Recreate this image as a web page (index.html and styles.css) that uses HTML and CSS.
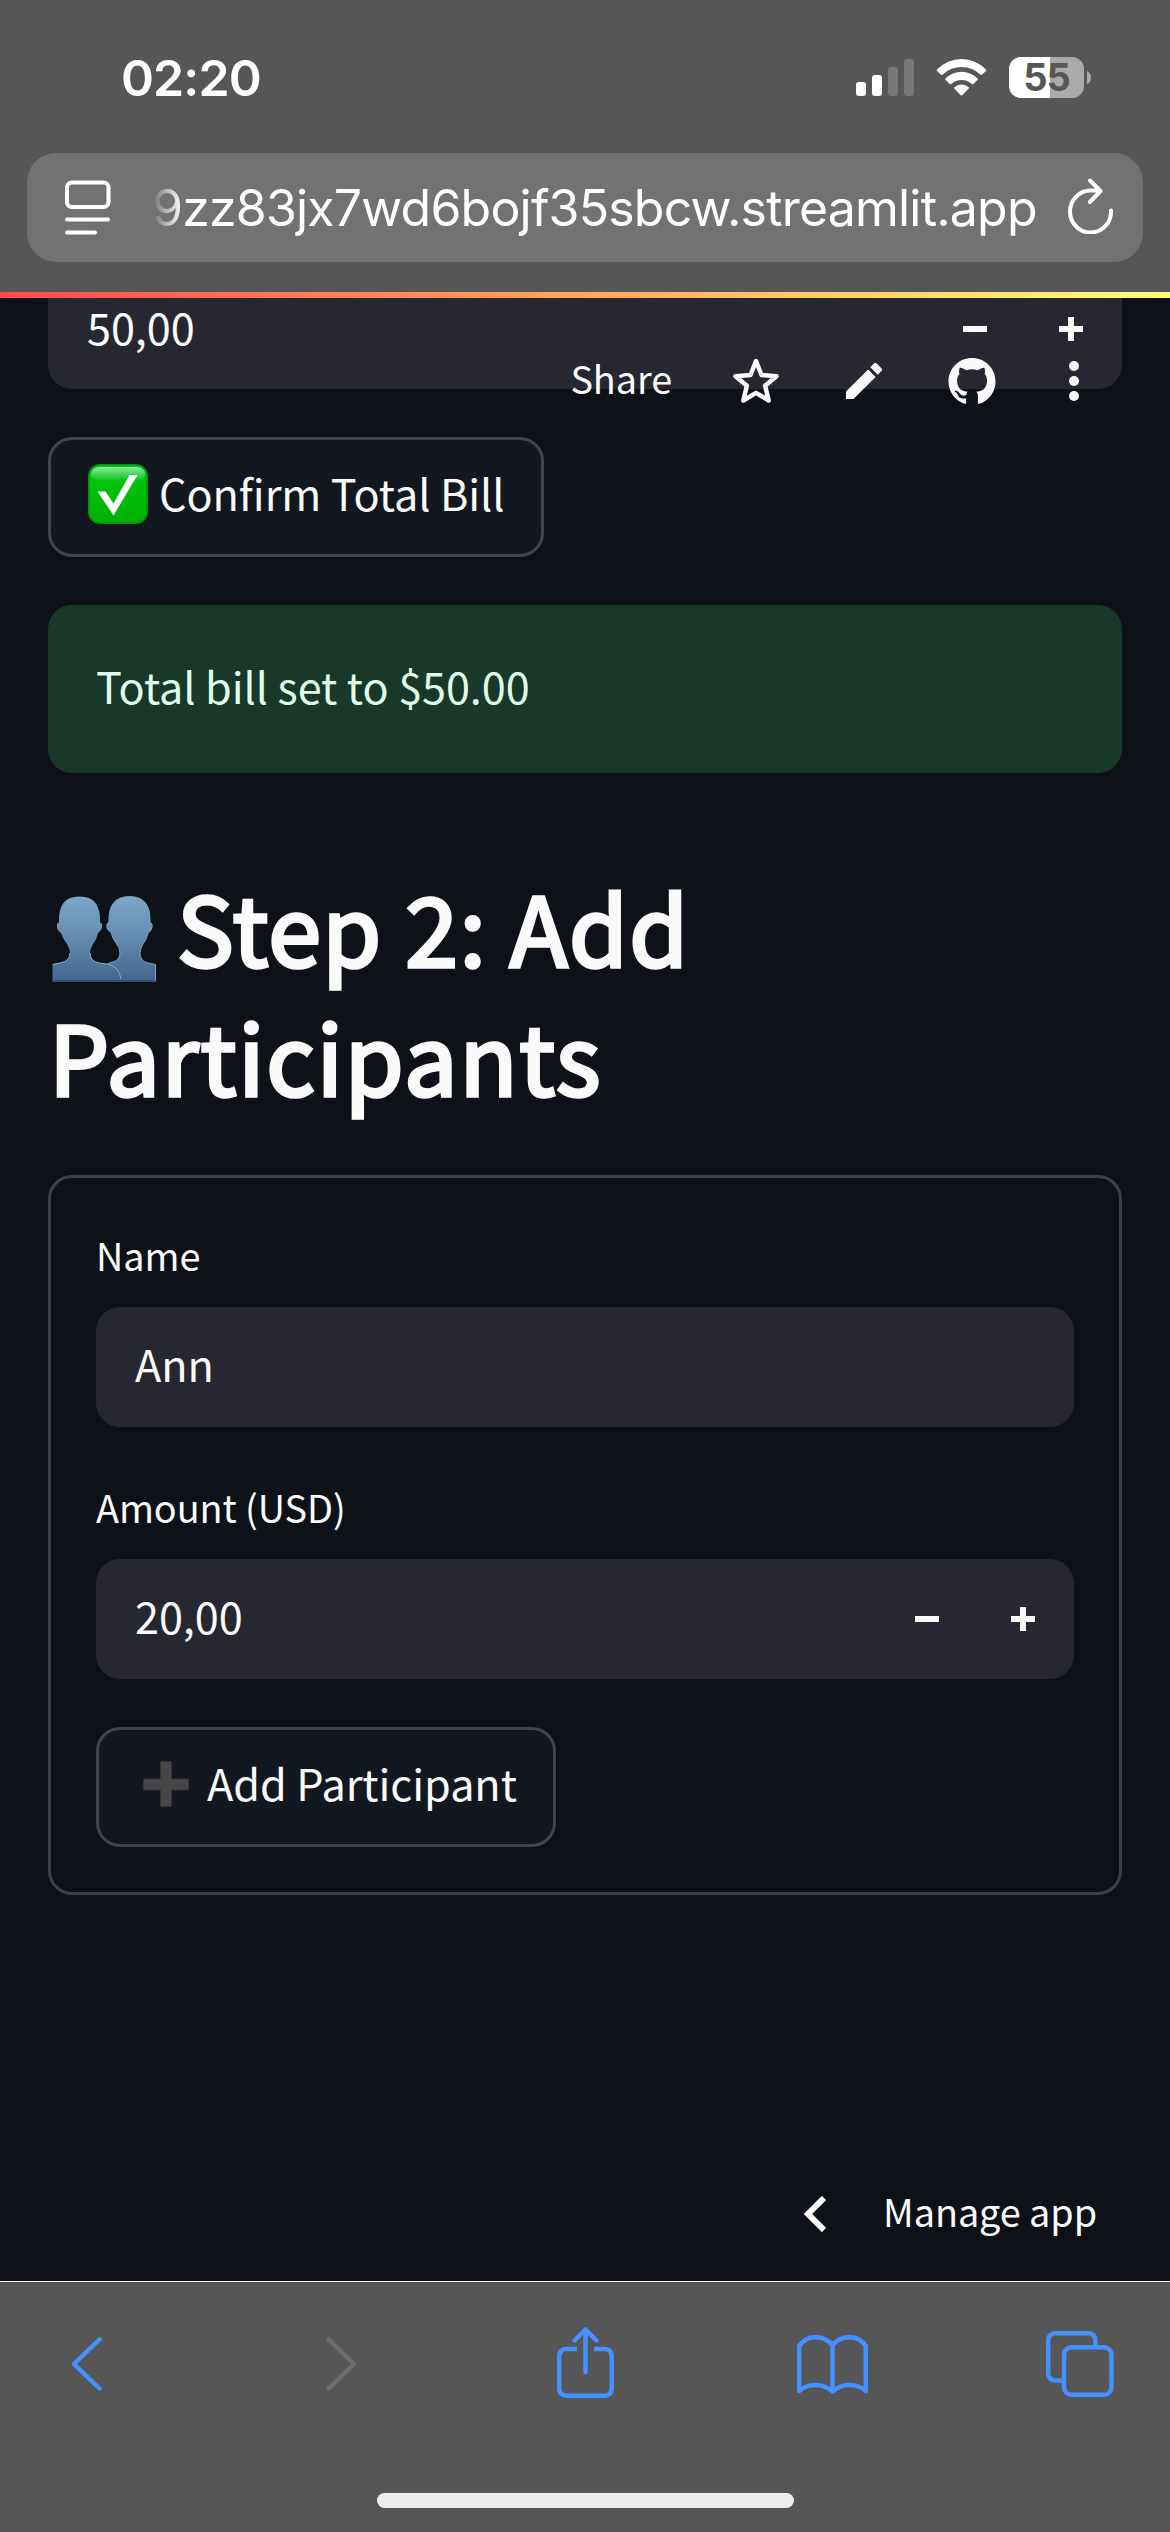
FILE: index.html
```html
<!DOCTYPE html>
<html lang="en">
<head>
<meta charset="utf-8">
<title>Bill splitter</title>
<link rel="stylesheet" href="styles.css">
</head>
<body>
<div class="phone">
  <header class="browser-top">
    <div class="status">
      <span class="clock">02:20</span>
      <div class="indicators">
        <svg class="signal" viewBox="0 0 58 37"><g fill="#fff"><rect y="23" width="10" height="14" rx="3"/><rect x="16" y="16" width="10" height="21" rx="3"/></g><g fill="#777"><rect x="32" y="8" width="10" height="29" rx="3"/><rect x="48" width="10" height="37" rx="3"/></g></svg>
        <svg class="wifi" viewBox="0 0 51 37" fill="#fff"><path d="M1 10.500Q11.500 0 25.500 0T50 10.500Q50.700 11.200 50 12L46 15.800Q45.400 16.400 44.600 15.700Q36.500 8 25.500 8T6.400 15.700Q5.600 16.400 5 15.800L1 12Q.3 11.200 1 10.500Z"/><path d="M9.500 19.500Q16.500 12.700 25.500 12.700T41.500 19.500Q42.100 20.200 41.500 20.900L37.200 25Q36.500 25.600 35.800 25Q31.500 21 25.500 21T15.200 25Q14.500 25.600 13.800 25L9.500 20.900Q8.900 20.200 9.500 19.500Z"/><path d="M18.300 28.300Q21.500 25.500 25.500 25.500T32.700 28.300Q33.300 29 32.700 29.600L26.300 36.200Q25.500 37 24.700 36.200L18.300 29.600Q17.700 29 18.300 28.300Z"/></svg>
        <div class="battery"><span class="battery-level">55</span><svg class="battery-tip" viewBox="0 0 4 13"><path d="M0 0Q4 1.500 4 6.500T0 13Z" fill="#aaa"/></svg></div>
      </div>
    </div>
    <div class="address">
      <svg class="reader" viewBox="0 0 46 56" fill="none" stroke="#fff" stroke-width="4" stroke-linecap="round"><rect x="2" y="2.500" width="41.500" height="24.500" rx="5"/><path d="M2 39.500H43M2 52.500H30"/></svg>
      <span class="url">9zz83jx7wd6bojf35sbcw.streamlit.app</span>
      <svg class="reload" viewBox="0 0 46 56" fill="none" stroke="#fff" stroke-width="4" stroke-linecap="round" stroke-linejoin="round"><path d="M43 32.500A20.500 21 0 1 1 22.500 12.500H32M22 2.500L32.500 13L22 24"/></svg>
    </div>
  </header>
  <div class="rainbow"></div>
  <main class="app">
    <nav class="toolbar">
      <span class="share">Share</span>
      <svg class="star" viewBox="0 0 46 46" fill="none" stroke="#fafafa" stroke-width="4.500" stroke-linejoin="round"><path d="M23 3L28.500 17L43.500 18.200L32.100 27.800L35.700 42.500L23 34.800L10.300 42.500L13.900 27.800L2.500 18.200L17.500 17Z"/></svg>
      <svg class="pencil" viewBox="3 3 18 18" fill="#fafafa"><path d="M3 17.250V21h3.750L17.810 9.940l-3.750-3.750L3 17.250zM20.710 7.040a1 1 0 0 0 0-1.410l-2.340-2.340a1 1 0 0 0-1.410 0l-1.830 1.830 3.750 3.750 1.830-1.830z"/></svg>
      <svg class="github" viewBox="0 0 16 16" fill="#fafafa"><path d="M8 0C3.580 0 0 3.580 0 8c0 3.540 2.290 6.530 5.470 7.590.4.070.55-.17.55-.38 0-.19-.01-.82-.01-1.490-2.010.37-2.530-.49-2.690-.94-.09-.23-.48-.94-.82-1.130-.28-.15-.68-.52-.01-.53.630-.01 1.080.58 1.230.82.720 1.210 1.870.87 2.330.66.070-.52.280-.87.510-1.070-1.780-.2-3.640-.89-3.640-3.950 0-.87.310-1.590.820-2.150-.08-.2-.36-1.020.08-2.120 0 0 .67-.21 2.200.82.640-.18 1.320-.27 2-.27s1.360.09 2 .27c1.530-1.040 2.200-.82 2.200-.82.440 1.100.160 1.920.080 2.120.510.560.820 1.270.820 2.150 0 3.070-1.870 3.750-3.650 3.950.290.250.540.730.540 1.480 0 1.070-.01 1.930-.01 2.200 0 .21.150.460.550.380A8.010 8.010 0 0 0 16 8c0-4.420-3.580-8-8-8z"/></svg>
      <svg class="dots" viewBox="0 0 10 40" fill="#fafafa"><circle cx="5" cy="5" r="5"/><circle cx="5" cy="20" r="5"/><circle cx="5" cy="35" r="5"/></svg>
    </nav>

    <div class="field field-cut"><span class="value">50,00</span><svg class="step" viewBox="0 0 24 24"><path d="M0 9H24V15H0Z"/></svg><svg class="step" viewBox="0 0 24 24"><path d="M9 0H15V9H24V15H15V24H9V15H0V9H9Z"/></svg></div>

    <button class="btn confirm">
      <svg class="check" viewBox="0 0 60 60"><defs><linearGradient id="shine" x1="0" y1="0" x2="0" y2="1"><stop offset="0" stop-color="#8fe89c"/><stop offset="1" stop-color="#00c612"/></linearGradient><linearGradient id="green" x1="0" y1="0" x2="0" y2="1"><stop offset="0" stop-color="#00cb13"/><stop offset="1" stop-color="#00af03"/></linearGradient></defs><rect width="60" height="60" rx="12" fill="#098d14"/><rect x="1.500" y="1.500" width="57" height="57" rx="11" fill="url(#green)"/><rect x="3" y="3" width="54" height="14" rx="8" fill="url(#shine)"/><path d="M9.500 27.500H17.500L25.500 39.500L41.500 11H49.500L25.500 51.500Z" fill="#fff"/></svg>
      <span class="label">Confirm Total Bill</span>
    </button>

    <div class="alert"><span class="alert-text">Total bill set to $50.00</span></div>

    <h1 class="title"><svg class="people" viewBox="0 0 104 86"><defs><linearGradient id="bust" x1="0" y1="0" x2="0" y2="86" gradientUnits="userSpaceOnUse"><stop offset="0" stop-color="#7da6c8"/><stop offset=".45" stop-color="#668eb3"/><stop offset="1" stop-color="#43658e"/></linearGradient></defs><g fill="url(#bust)" stroke="#6fa5bd" stroke-width="1"><path d="M54 85.500V72Q54 67 61 66Q68 64 68 57Q68 52 64 47Q60 42 59 36Q54 34 55 28L57 26Q56 .5 77.500 .5T98 26L100 28Q101 34 96 37Q95 43 91 48Q88 53 88 57Q88 65 96 67L103.500 68.500V85.500Z"/><path stroke="none" d="M.5 85.500V68.500L8 67Q18 65 18 57Q18 53 15 48Q11 43 9 37Q4 34 5 28L7 26Q6 .5 27.500 .5T48 26L50 28Q51 34 46 37Q45 43 41 48Q38 53 38 57Q38 65 47 67L55 68Q69 72 69 85.500Z"/></g><path d="M.5 68.500L8 67Q18 65 18 57M38 57Q38 65 47 67L55 68Q67 70 69 83" fill="none" stroke="#7cb4cc"/><path d="M.5 85H103.500" stroke="#314f76" stroke-width="2"/></svg><span class="line">Step 2: Add</span><br><span class="line second">Participants</span></h1>

    <form class="card">
      <label class="caption name-caption">Name</label>
      <div class="field"><span class="value">Ann</span></div>
      <label class="caption amount-caption">Amount (USD)</label>
      <div class="field"><span class="value">20,00</span><svg class="step" viewBox="0 0 24 24"><path d="M0 9H24V15H0Z"/></svg><svg class="step" viewBox="0 0 24 24"><path d="M9 0H15V9H24V15H15V24H9V15H0V9H9Z"/></svg></div>
      <button class="btn add" type="button">
        <svg class="plus" viewBox="0 0 46 46"><path d="M17.500 .5H28.500V18H45.500V29H28.500V45.500H17.500V29H.5V18H17.500Z" fill="#464646" stroke="#343434"/></svg>
        <span class="label">Add Participant</span>
      </button>
    </form>

    <div class="manage">
      <svg class="chevron" viewBox="0 0 22 36"><path d="M20 2L4 18L20 34" fill="none" stroke="#fff" stroke-width="6"/></svg>
      <span class="manage-text">Manage app</span>
    </div>
  </main>
  <footer class="browser-bottom">
    <div class="tabs">
      <svg class="back" viewBox="0 0 31 54"><path d="M28.500 2.500L3 27L28.500 51.500"/></svg>
      <svg class="forward" viewBox="0 0 31 54"><path d="M2.500 2.500L28 27L2.500 51.500"/></svg>
      <svg class="send" viewBox="0 0 57 71"><path d="M20 22H10Q2.200 22 2.200 30V61Q2.200 68.800 10 68.800H47Q54.800 68.800 54.800 61V30Q54.800 22 47 22H37" stroke-linecap="butt"/><path d="M28.500 45V3M17.500 13.500L28.500 2.500L39.500 13.500"/></svg>
      <svg class="book" viewBox="0 0 71 59"><path d="M35.500 10Q29 2.200 18.500 2.200T2.200 11V56Q9 50 18.500 50T35.500 56.500Q43 50 52.500 50T68.800 56V11Q63 2.200 52.500 2.200T35.500 10V56"/></svg>
      <svg class="windows" viewBox="0 0 68 66"><path d="M49.500 15V10Q49.500 2.200 42 2.200H10Q2.200 2.200 2.200 10V42Q2.200 49.500 10 49.500H15"/><rect x="18" y="16.200" width="47.500" height="47.500" rx="7.500"/></svg>
    </div>
    <div class="home"></div>
  </footer>
</div>
</body>
</html>
```
FILE: styles.css
```css
* { box-sizing: border-box; }
body { margin: 0; background: #0e1117; }
svg { display: block; flex: none; }
.phone {
  width: 1170px;
  height: 2532px;
  display: flex;
  flex-direction: column;
  background: #0e1117;
  color: #fafafa;
  font-family: "Noto Sans CJK SC", "Noto Sans", sans-serif;
  letter-spacing: -0.07px;
}

/* Browser chrome, top */
.browser-top { height: 292px; background: #565656; font-family: Inter, sans-serif; color: #fff; }
.status { height: 153px; padding: 57px 79px 0 121px; display: flex; justify-content: space-between; align-items: flex-start; }
.clock { font-size: 50px; font-weight: 600; line-height: 42px; letter-spacing: -0.9px; }
.indicators { display: flex; align-items: center; height: 41px; }
.signal { width: 58px; height: 37px; margin-right: 22px; }
.wifi { width: 51px; height: 37px; margin-right: 22px; }
.battery { display: flex; align-items: center; gap: 3px; }
.battery-level {
  width: 75px;
  height: 41px;
  border-radius: 12px;
  background: linear-gradient(90deg, #fff 41px, #aaa 41px);
  color: #565656;
  font-size: 38px;
  font-weight: 700;
  line-height: 41px;
  letter-spacing: -1px;
  text-align: center;
}
.battery-tip { width: 4px; height: 13px; }
.address {
  height: 109px;
  margin: 0 27px;
  padding: 0 29px 0 38px;
  border-radius: 29px;
  background: #727272;
  display: flex;
  align-items: center;
}
.reader { width: 46px; height: 56px; margin-right: 41px; }
.url {
  flex: 1;
  font-size: 50px;
  line-height: 60px;
  white-space: nowrap;
  letter-spacing: -0.8px;
  -webkit-mask-image: linear-gradient(90deg, transparent, #000 30px);
  mask-image: linear-gradient(90deg, transparent, #000 30px);
}
.reload { width: 46px; height: 56px; margin-bottom: 4px; }
.rainbow { height: 6px; background: linear-gradient(90deg, #ff4b4b, #ffa663 50%, #fffd80); }

/* App */
.app { position: relative; height: 1983px; padding: 0 48px; }
.toolbar { position: absolute; top: 60px; right: 91px; height: 46px; display: flex; align-items: center; }
.share { font-size: 37.800px; line-height: 46px; padding-bottom: 7px; margin-right: 61px; }
.star { width: 46px; height: 46px; margin-right: 67px; }
.pencil { width: 36px; height: 36px; margin-right: 66px; }
.github { width: 48px; height: 47px; margin-right: 73px; }
.dots { width: 10px; height: 40px; }

.field {
  height: 120px;
  padding: 0 39px;
  border-radius: 24px;
  background: #262730;
  display: flex;
  align-items: center;
  gap: 72px;
}
.value { flex: 1; font-size: 43.200px; line-height: 60px; padding-bottom: 8px; }
.field-cut { height: 91px; border-radius: 0 0 24px 24px; align-items: flex-end; }
.field-cut .value { padding: 0; margin-bottom: 35px; line-height: 56px; }
.field-cut .step { margin-bottom: 48px; }
.step { width: 24px; height: 24px; fill: #fafafa; }

.btn {
  display: flex;
  align-items: center;
  height: 120px;
  margin: 48px 0 0;
  border: 3px solid #41444c;
  border-radius: 24px;
  background: #131720;
  color: inherit;
  font-family: inherit;
}
.label { font-size: 43.200px; line-height: 60px; padding-bottom: 10px; letter-spacing: -0.070px; white-space: nowrap; }
.confirm { width: 496px; padding: 0 0 0 37px; }
.check { width: 60px; height: 60px; margin: 0 11px 6px 0; }
.alert {
  height: 168px;
  margin-top: 48px;
  padding: 0 48px 8px;
  border-radius: 24px;
  background: #183829;
  color: #dffde9;
  display: flex;
  align-items: center;
}
.alert-text { font-size: 43.200px; }
.title {
  margin: 88px 0 0;
  height: 266px;
  font-size: 95px;
  font-weight: 400;
  letter-spacing: 1.4px;
  line-height: 129px;
  white-space: nowrap;
  -webkit-text-stroke: 3.600px #fafafa;
}
.people { display: inline-block; width: 104px; height: 86px; margin: 0 21px 0 4px; vertical-align: -15px; }
.second { padding-left: 1px; letter-spacing: 1.9px; }

.card {
  height: 720px;
  margin: 48px 0 0;
  padding: 45px;
  border: 3px solid #3e4044;
  border-radius: 24px;
}
.caption { display: block; font-size: 37.800px; line-height: 60px; height: 84px; padding-top: 2px; }
.amount-caption { margin-top: 48px; }
.add { width: 460px; padding: 0 0 0 44px; }
.plus { width: 46px; height: 46px; margin: 0 18px 6px 0; }
.manage { display: flex; align-items: center; justify-content: flex-end; height: 60px; margin: 289px 25px 0 0; }
.chevron { width: 22px; height: 36px; margin-right: 57px; }
.manage-text { font-size: 37.800px; line-height: 60px; padding-bottom: 7px; }

/* Browser chrome, bottom */
.browser-bottom { height: 251px; border-top: 1px solid #fff; background: #565656; }
.tabs { height: 164px; padding: 0 56px 0 71px; display: flex; align-items: center; fill: none; stroke: #4591ff; stroke-width: 4.500; stroke-linecap: round; stroke-linejoin: round; }
.back { width: 31px; height: 54px; margin-right: 224px; }
.forward { width: 31px; height: 54px; margin-right: 200px; stroke: #6d6d6d; }
.send { width: 57px; height: 71px; margin-right: 183px; margin-bottom: 4px; }
.book { width: 71px; height: 59px; margin-right: 178px; }
.windows { width: 68px; height: 66px; }
.home { width: 417px; height: 15px; margin: 47px 0 0 377px; border-radius: 8px; background: #eee; }
```
